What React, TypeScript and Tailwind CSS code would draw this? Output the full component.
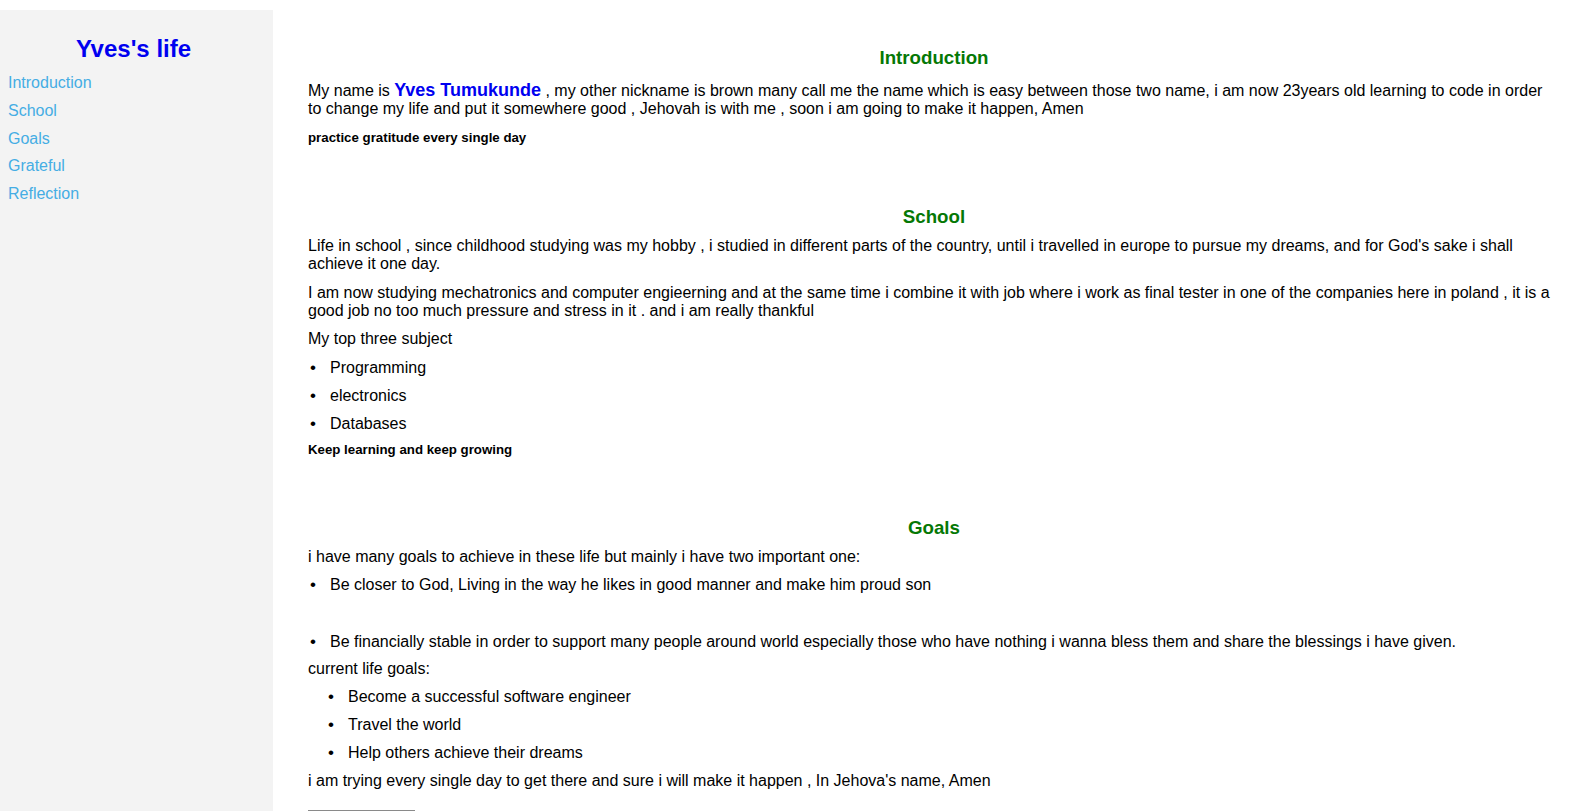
import React from 'react';

const navLinks = ['Introduction', 'School', 'Goals', 'Grateful', 'Reflection'];

const Bullet: React.FC<{ children: React.ReactNode; className?: string; nested?: boolean }> = ({ children, className, nested }) => (
  <li className={`flex leading-[18.4px] ${nested ? 'pl-[18px]' : ''} ${className ?? ''}`}>
    <span className="w-[22px] shrink-0 pl-[2px] text-[17px]">•</span>
    <span>{children}</span>
  </li>
);

export default function App() {
  return (
    <div className="flex min-h-screen bg-white pt-[10px] font-['Liberation_Sans',Arial,sans-serif] text-[16px] text-black">
      {/* sidebar */}
      <aside className="w-[273px] shrink-0 self-stretch bg-[#f3f3f3] px-2 pt-[25px]">
        <h2 className="pr-[6px] text-center text-[24px] font-bold leading-[27.6px] text-[#0000f0]">Yves's life</h2>
        <nav className="mt-[11.5px] flex flex-col">
          {navLinks.map((l) => (
            <a key={l} href={`#${l.toLowerCase()}`} className="mb-[9.3px] leading-[18.4px] text-[#45ade4]">
              {l}
            </a>
          ))}
        </nav>
      </aside>

      {/* main content */}
      <main className="min-w-0 flex-1 pl-[35px] pr-[22px] pt-[36.5px]">
        <section id="introduction">
          <h3 className="text-center text-[18.72px] font-bold leading-[22px] text-[#057805]">Introduction</h3>
          <p className="mt-[12.5px] leading-[18.4px]">
            My name is <strong className="text-[18px] font-bold text-[#0000f0]">Yves Tumukunde</strong> , my other nickname is brown many call me the name which is easy between those two name, i am now 23years old learning to code in order to change my life and put it somewhere good , Jehovah is with me , soon i am going to make it happen, Amen
          </p>
          <h5 className="mt-[11.5px] text-[13.28px] font-bold leading-[15.3px]">practice gratitude every single day</h5>
        </section>

        <section id="school" className="mt-[60.3px]">
          <h3 className="text-center text-[18.72px] font-bold leading-[22px] text-[#057805]">School</h3>
          <p className="mt-[9px] leading-[18.4px]">
            Life in school , since childhood studying was my hobby , i studied in different parts of the country, until i travelled in europe to pursue my dreams, and for God's sake i shall achieve it one day.
          </p>
          <p className="mt-[10px] leading-[18.4px]">
            I am now studying mechatronics and computer engieerning and at the same time i combine it with job where i work as final tester in one of the companies here in poland , it is a good job no too much pressure and stress in it . and i am really thankful
          </p>
          <p className="mt-[9.8px] leading-[18.4px]">My top three subject</p>
          <ul>
            <Bullet className="mt-[9.8px]">Programming</Bullet>
            <Bullet className="mt-[9.8px]">electronics</Bullet>
            <Bullet className="mt-[9.8px]">Databases</Bullet>
          </ul>
          <h5 className="mt-[8.5px] text-[13.28px] font-bold leading-[15.3px]">Keep learning and keep growing</h5>
        </section>

        <section id="goals" className="mt-[60.3px]">
          <h3 className="text-center text-[18.72px] font-bold leading-[22px] text-[#057805]">Goals</h3>
          <p className="mt-[9px] leading-[18.4px]">i have many goals to achieve in these life but mainly i have two important one:</p>
          <ul>
            <Bullet className="mt-[9.6px]">Be closer to God, Living in the way he likes in good manner and make him proud son</Bullet>
            <Bullet className="mt-[38.6px]">
              Be financially stable in order to support many people around world especially those who have nothing i wanna bless them and share the blessings i have given.
            </Bullet>
          </ul>
          <p className="mt-[8.6px] leading-[18.4px]">current life goals:</p>
          <ul>
            <Bullet nested className="mt-[9.6px]">Become a successful software engineer</Bullet>
            <Bullet nested className="mt-[9.6px]">Travel the world</Bullet>
            <Bullet nested className="mt-[9.6px]">Help others achieve their dreams</Bullet>
          </ul>
          <p className="mt-[9.6px] leading-[18.4px]">i am trying every single day to get there and sure i will make it happen , In Jehova's name, Amen</p>
        </section>

        <div className="mt-[19.6px] w-[107px] border-t border-[#8a8a8a]" />
        <div className="h-[200px]" />
      </main>
    </div>
  );
}
